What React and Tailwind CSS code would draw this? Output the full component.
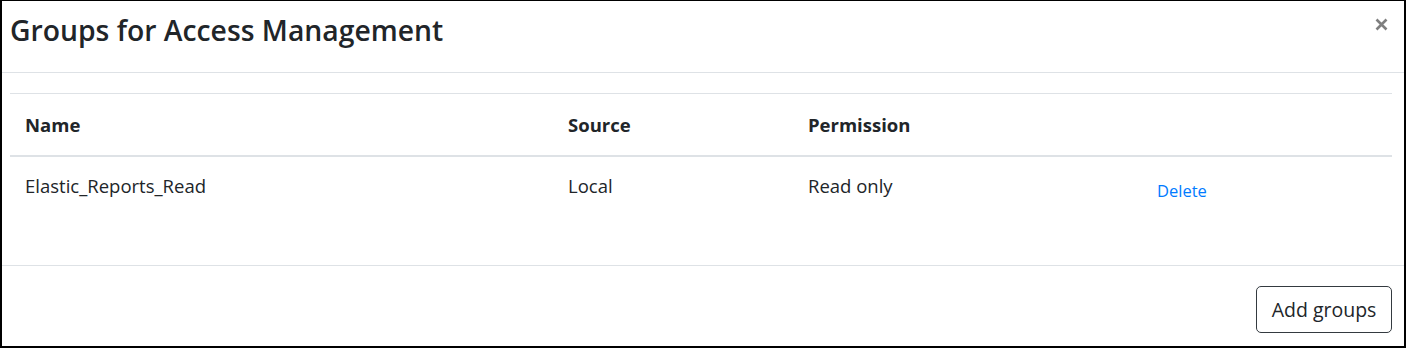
import React from "react";

const groups = [
  { name: "Elastic_Reports_Read", source: "Local", permission: "Read only" },
];

const App = () => {
  return (
    <main
      className="w-[1406px] h-[348px] bg-white text-[#212529] border-2 border-t border-black flex flex-col"
      style={{ fontFamily: '"Open Sans", "Noto Sans", sans-serif' }}
    >
      <div className="h-[72px] border-b border-[#dee2e6] flex justify-between pl-2 pr-4 pt-[11px]">
        <h1 className="text-[28.3px] leading-9 font-semibold">
          Groups for Access Management
        </h1>
        <button className="w-[13px] h-[13px] mt-[6px] text-[#7f7f7f]">
          <svg viewBox="0 0 13 13" width="13" height="13">
            <path d="M1.5 1.5 L11.5 11.5 M11.5 1.5 L1.5 11.5" stroke="currentColor" strokeWidth="2.6" strokeLinecap="butt" />
          </svg>
        </button>
      </div>

      <div className="h-[192px] pt-5 pl-2 pr-3">
        <table className="w-full table-fixed border-collapse text-[18.5px]">
          <colgroup>
            <col className="w-[543px]" />
            <col className="w-[240px]" />
            <col className="w-[349px]" />
            <col />
          </colgroup>
          <thead>
            <tr className="border-t border-[#dee2e6] border-b-2">
              <th className="text-left font-bold px-[15px] h-[62px] pt-[1px] align-middle">Name</th>
              <th className="text-left font-bold px-[15px] pt-[1px] align-middle">Source</th>
              <th className="text-left font-bold px-[15px] pt-[1px] align-middle">Permission</th>
              <th></th>
            </tr>
          </thead>
          <tbody>
            {groups.map((g) => (
              <tr key={g.name}>
                <td className="px-[15px] pt-[17px] align-top leading-6">{g.name}</td>
                <td className="px-[15px] pt-[17px] align-top leading-6">{g.source}</td>
                <td className="px-[15px] pt-[17px] align-top leading-6">{g.permission}</td>
                <td className="px-[15px] pt-[21px] align-top leading-6">
                  <button className="text-[#007bff] text-[16.5px]">Delete</button>
                </td>
              </tr>
            ))}
          </tbody>
        </table>
      </div>

      <div className="flex-1 border-t border-[#dee2e6] flex justify-end items-start pt-5 pr-3">
        <button className="h-[47px] w-[136px] border border-[#343a40] rounded-[5px] text-[19.5px] text-[#212529]">
          Add groups
        </button>
      </div>
    </main>
  );
};

export default App;
